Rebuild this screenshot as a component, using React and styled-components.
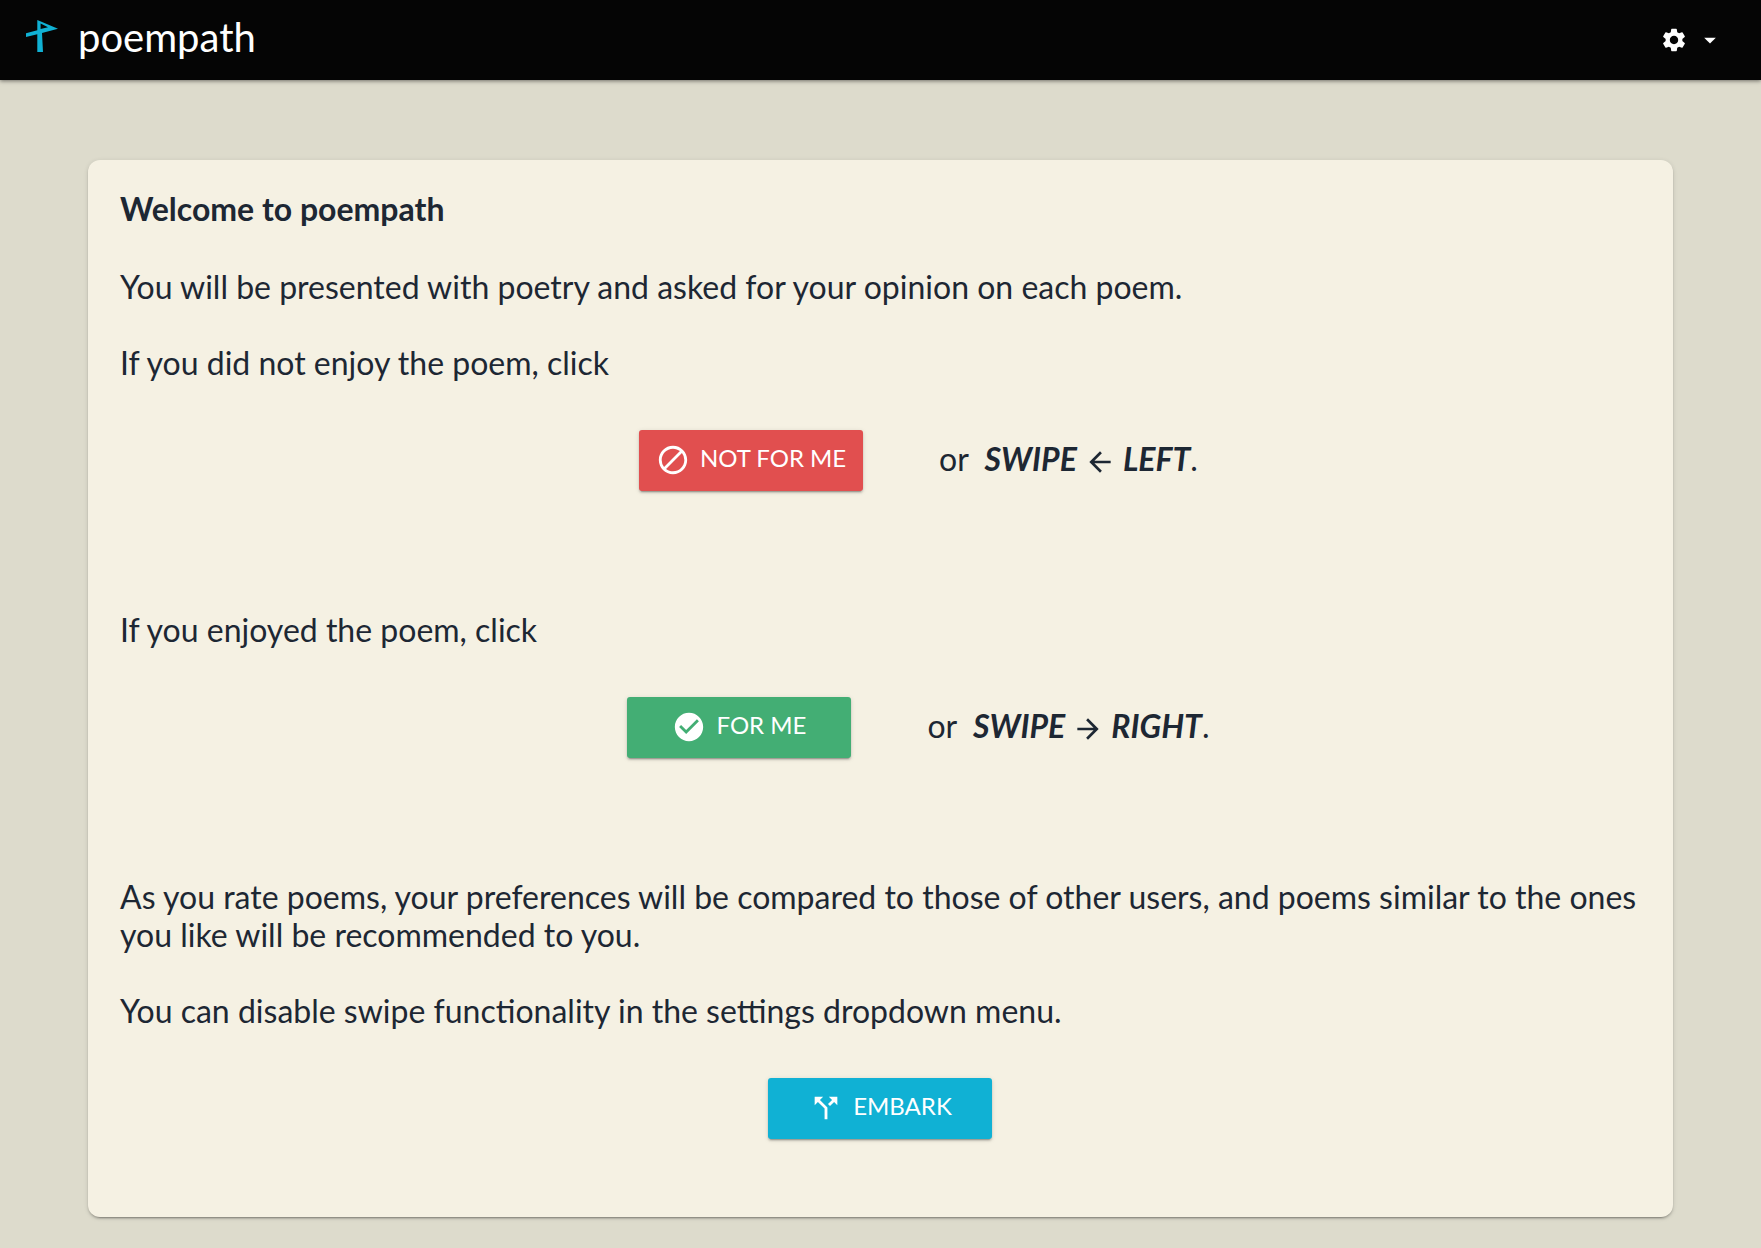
import React from "react";
import styled, { createGlobalStyle } from "styled-components";
import {
  MdArrowBack,
  MdArrowDropDown,
  MdArrowForward,
  MdBlock,
  MdCallSplit,
  MdCheckCircle,
  MdSettings,
} from "react-icons/md";

const GlobalStyle = createGlobalStyle`
  * { box-sizing: border-box; }
  body {
    margin: 0;
    background: #dddbcc;
    color: #1d2733;
    font-family: Lato, "Open Sans", sans-serif;
    font-size: 32px;
    line-height: 38px;
  }
`;

const Header = styled.header`
  display: flex;
  align-items: center;
  justify-content: space-between;
  height: 80px;
  padding: 0 37px 0 26px;
  background: #050505;
  color: #fff;
  box-shadow: 0 1px 4px rgba(0, 0, 0, 0.5);
`;

const Brand = styled.a`
  display: flex;
  align-items: center;
  gap: 20px;
  padding-bottom: 6px;
  color: inherit;
  font-size: 40px;
  line-height: 48px;
  text-decoration: none;
`;

const Logo = styled.svg`
  width: 32px;
  height: 32px;
  margin-bottom: 2px;
  fill: #10b1d4;
`;

const SettingsButton = styled.button`
  display: flex;
  align-items: center;
  gap: 8px;
  padding: 0;
  border: 0;
  background: none;
  color: inherit;
  cursor: pointer;
  font-size: 28px;
`;

const Card = styled.main`
  width: 90%;
  margin: 80px auto 32px;
  padding: 30px 32px 78px;
  border-radius: 12px;
  background: #f5f1e3;
  box-shadow:
    0 3px 1px -2px rgba(0, 0, 0, 0.2),
    0 2px 2px rgba(0, 0, 0, 0.14),
    0 1px 5px rgba(0, 0, 0, 0.12);
`;

const Title = styled.h1`
  margin: 0 0 40px;
  font-size: 32px;
  font-weight: 700;
  line-height: 38px;
`;

const Paragraph = styled.p`
  margin: 0 0 38px;
`;

const Choice = styled.section`
  margin-bottom: 120px;
`;

const Row = styled.div`
  display: flex;
  align-items: center;
  justify-content: center;
  gap: 76px;
  margin-top: 48px;
  padding-left: ${(p) => (p.$offset ? "76px" : "0")};
`;

const ActionButton = styled.button`
  display: flex;
  align-items: center;
  justify-content: center;
  gap: 10px;
  width: 224px;
  height: 61px;
  padding: 0 0 6px;
  border: 0;
  border-radius: 3px;
  background: ${(p) => p.$color};
  color: #fff;
  cursor: pointer;
  font-family: inherit;
  font-size: 24px;
  line-height: 30px;
  text-transform: uppercase;
  box-shadow:
    0 3px 1px -2px rgba(0, 0, 0, 0.2),
    0 2px 2px rgba(0, 0, 0, 0.14),
    0 1px 5px rgba(0, 0, 0, 0.12);

  svg {
    flex: none;
    margin-top: 4px;
    font-size: 34px;
  }
`;

const Hint = styled.span`
  padding-bottom: 3px;
`;

const Swipe = styled.strong`
  font-style: italic;

  svg {
    vertical-align: -7px;
  }
`;

function SwipeHint({ icon, children }) {
  return (
    <Hint>
      or&nbsp; <Swipe>SWIPE {icon} {children}</Swipe>.
    </Hint>
  );
}

export default function App() {
  return (
    <>
      <GlobalStyle />
      <Header>
        <Brand href="#">
          <Logo viewBox="0 0 32 32" aria-hidden="true">
            <path
              fillRule="evenodd"
              d="M11.300 0L32 8.700L16 13L17 32H11.300V14.300L0 17V13.200L11.300 10.200ZM14.600 3.500V8.900L22 7.300Z"
            />
          </Logo>
          poempath
        </Brand>
        <SettingsButton type="button" aria-label="Settings" aria-haspopup="menu">
          <MdSettings />
          <MdArrowDropDown />
        </SettingsButton>
      </Header>
      <Card>
        <Title>Welcome to poempath</Title>
        <Paragraph>
          You will be presented with poetry and asked for your opinion on each poem.
        </Paragraph>
        <Choice>
          If you did not enjoy the poem, click
          <Row $offset>
            <ActionButton type="button" $color="#e14f4f">
              <MdBlock />
              Not for me
            </ActionButton>
            <SwipeHint icon={<MdArrowBack />}>LEFT</SwipeHint>
          </Row>
        </Choice>
        <Choice>
          If you enjoyed the poem, click
          <Row $offset>
            <ActionButton type="button" $color="#43ae74">
              <MdCheckCircle />
              For me
            </ActionButton>
            <SwipeHint icon={<MdArrowForward />}>RIGHT</SwipeHint>
          </Row>
        </Choice>
        <Paragraph>
          As you rate poems, your preferences will be compared to those of other users, and
          poems similar to the ones you like will be recommended to you.
        </Paragraph>
        <Paragraph>You can disable swipe functionality in the settings dropdown menu.</Paragraph>
        <Row>
          <ActionButton type="button" $color="#10b1d4">
            <MdCallSplit />
            Embark
          </ActionButton>
        </Row>
      </Card>
    </>
  );
}
